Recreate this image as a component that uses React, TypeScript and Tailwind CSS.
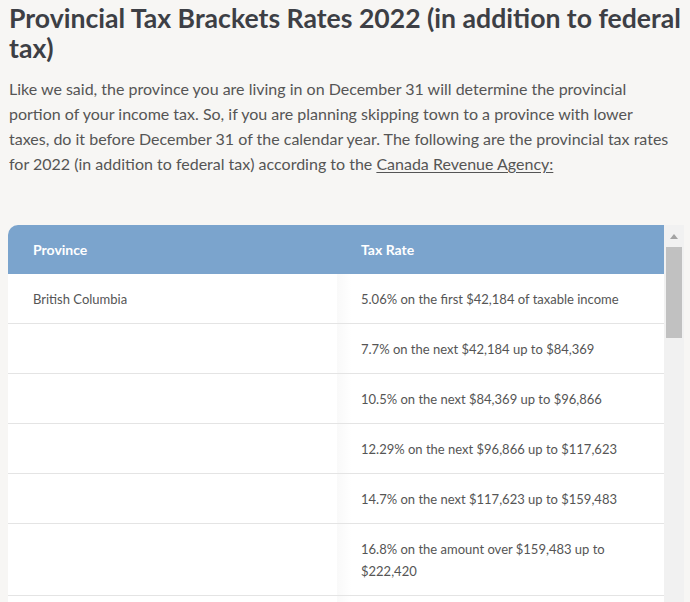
import React from "react";

const rows: { p: string; r: React.ReactNode }[] = [
  { p: "British Columbia", r: "5.06% on the first $42,184 of taxable income" },
  { p: "", r: "7.7% on the next $42,184 up to $84,369" },
  { p: "", r: "10.5% on the next $84,369 up to $96,866" },
  { p: "", r: "12.29% on the next $96,866 up to $117,623" },
  { p: "", r: "14.7% on the next $117,623 up to $159,483" },
  {
    p: "",
    r: (
      <>
        16.8% on the amount over $159,483 up to
        <br />
        $222,420
      </>
    ),
  },
];

export default function App() {
  return (
    <div
      className="w-[690px] h-[602px] overflow-hidden bg-[#f7f6f4] text-[#555555]"
      style={{ fontFamily: "Lato, 'Open Sans', sans-serif" }}
    >
      <h2 className="pl-[9px] pt-[3px] text-[26.6px] leading-[30px] font-bold text-[#3d3f45] whitespace-nowrap">
        Provincial Tax Brackets Rates 2022 (in addition to federal
        <br />
        tax)
      </h2>
      <p className="pl-[9px] mt-[13px] text-[16px] leading-[25px] text-[#555555] whitespace-nowrap">
        Like we said, the province you are living in on December 31 will determine the provincial
        <br />
        portion of your income tax. So, if you are planning skipping town to a province with lower
        <br />
        taxes, do it before December 31 of the calendar year. The following are the provincial tax rates
        <br />
        for 2022 (in addition to federal tax) according to the{" "}
        <a className="underline underline-offset-2 text-[#555555]" href="#">
          Canada Revenue Agency:
        </a>
      </p>
      <div className="mt-[49px] ml-[8px] flex w-[676px]">
        <div className="w-[656px] flex flex-col">
          <div className="grid grid-cols-[329px_327px] bg-[#7ba4cd] rounded-tl-[10px] text-white font-bold text-[14px] leading-[22px]">
            <div className="pl-[25px] pt-[14px] pb-[13px]">Province</div>
            <div className="pl-[24px] pt-[14px] pb-[13px]">Tax Rate</div>
          </div>
          {rows.map((row, i) => (
            <div
              key={i}
              className="grid grid-cols-[329px_327px] bg-white border-b border-[#e4e4e4] text-[13px] leading-[22px] text-[#555555]"
            >
              <div className="pl-[25px] pr-4 pt-[14px] pb-[13px]">{row.p}</div>
              <div className="pl-[24px] pr-4 pt-[14px] pb-[13px] bg-[linear-gradient(to_right,#f9f9f9,#ffffff_14px)]">
                {row.r}
              </div>
            </div>
          ))}
          <div className="grid grid-cols-[329px_327px] bg-white h-[30px]">
            <div />
            <div className="bg-[linear-gradient(to_right,#f9f9f9,#ffffff_14px)]" />
          </div>
        </div>
        <div className="w-[20px] bg-[#f1f1f1] flex flex-col items-center">
          <div className="h-[22px] flex items-center justify-center">
            <svg width="8" height="5" viewBox="0 0 8 5">
              <polygon points="4,0 8,5 0,5" fill="#a3a3a3" />
            </svg>
          </div>
          <div className="w-[16px] h-[91px] bg-[#c1c1c1]" />
        </div>
      </div>
    </div>
  );
}
